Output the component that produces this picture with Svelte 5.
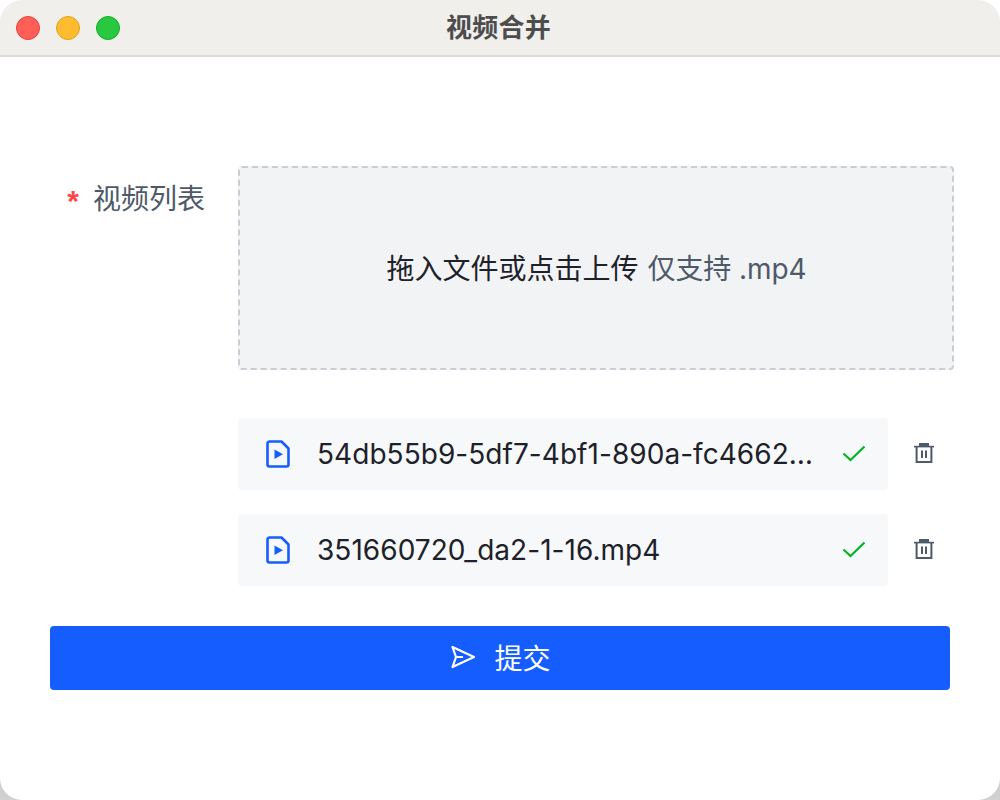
<script>
    const files = [
        { name: '54db55b9-5df7-4bf1-890a-fc4662b1c3d7.mp4' },
        { name: '351660720_da2-1-16.mp4' }
    ];
</script>

<div class="window">
    <header class="titlebar">
        <div class="lights">
            <span class="light red"></span>
            <span class="light yellow"></span>
            <span class="light green"></span>
        </div>
        <span class="title">视频合并</span>
    </header>

    <main class="content">
        <div class="form-row">
            <div class="label"><span class="star">*</span>视频列表</div>
            <div class="control">
                <div class="dropzone">
                    <span>拖入文件或点击上传</span>
                    <span class="hint">仅支持 .mp4</span>
                </div>

                <ul class="files">
                    {#each files as file}
                        <li class="file-row">
                            <div class="file">
                                <svg class="file-icon" viewBox="0 0 24 28" width="24" height="28" fill="none">
                                    <path d="M3.5 1.5H15.5L22.5 8.5V24.5A2 2 0 0 1 20.5 26.5H3.5A2 2 0 0 1 1.5 24.5V3.5A2 2 0 0 1 3.5 1.5Z" stroke="#165dff" stroke-width="2.6" stroke-linejoin="round" />
                                    <path d="M8.5 9.5L17 14.2L8.5 19Z" fill="#165dff" />
                                </svg>
                                <span class="file-name">{file.name}</span>
                                <svg class="check" viewBox="0 0 24 24" width="24" height="24" fill="none">
                                    <path d="M1.5 12.5L8.5 19L22.5 5.5" stroke="#00b42a" stroke-width="2.2" />
                                </svg>
                            </div>
                            <svg class="trash" viewBox="0 0 20 20" width="20" height="20" fill="none">
                                <path d="M0 3.6H20" stroke="#4e5969" stroke-width="1.6" />
                                <path d="M5 0H15V3H5Z" fill="#4e5969" />
                                <path d="M2.6 3.6V19H17.4V3.6" stroke="#4e5969" stroke-width="2" />
                                <path d="M8 7.5V15M12 7.5V15" stroke="#4e5969" stroke-width="2" />
                            </svg>
                        </li>
                    {/each}
                </ul>
            </div>
        </div>

        <button class="submit">
            <svg viewBox="0 0 24 24" width="24" height="24" fill="none">
                <path d="M1.5 2L23 12L1.5 22L5 12Z" stroke="#fff" stroke-width="2.2" stroke-linejoin="round" />
                <path d="M5 12H12" stroke="#fff" stroke-width="2" />
            </svg>
            <span>提交</span>
        </button>
    </main>
</div>

<style>
    :global(body) {
        margin: 0;
        background: linear-gradient(#fff 50%, #d0d0d0 50%);
    }

    * {
        box-sizing: border-box;
    }

    .window {
        width: 1000px;
        height: 800px;
        background: #fff;
        border-radius: 22px;
        overflow: hidden;
        font-family: Inter, 'Noto Sans CJK SC', sans-serif;
        font-size: 28px;
        color: #1d2129;
    }

    .titlebar {
        height: 57px;
        background: #f0efec;
        border-bottom: 2px solid #dcdcdc;
        display: flex;
        align-items: center;
        justify-content: center;
        position: relative;
        padding: 0 3px 4px 0;
    }

    .lights {
        position: absolute;
        left: 16px;
        top: 16px;
        display: flex;
        gap: 16px;
    }

    .light {
        width: 24px;
        height: 24px;
        border-radius: 50%;
        border: 1px solid;
    }

    .red {
        background: #ff5f57;
        border-color: #e0443e;
    }

    .yellow {
        background: #febc2e;
        border-color: #dea123;
    }

    .green {
        background: #28c840;
        border-color: #1aab29;
    }

    .title {
        font-size: 26px;
        font-weight: 700;
        color: #4d4d4d;
        letter-spacing: 0.3px;
    }

    .content {
        padding: 109px 50px 0;
    }

    .form-row {
        display: flex;
    }

    .label {
        flex: none;
        width: 188px;
        padding: 15px 33px 0 0;
        color: #4e5969;
        line-height: 36px;
        white-space: nowrap;
        display: flex;
        justify-content: flex-end;
    }

    .star {
        color: #ff4646;
        margin: 2px 14px 0 0;
        font-family: 'Liberation Sans', sans-serif;
        font-size: 30px;
        font-weight: 700;
        width: 12px;
        text-align: center;
    }

    .control {
        flex: none;
        width: 716px;
    }

    .dropzone {
        height: 204px;
        background: #f2f3f5;
        border: 2px dashed #c9cdd4;
        border-radius: 4px;
        display: flex;
        align-items: center;
        justify-content: center;
        gap: 9px;
        padding: 0 0 3px 1px;
    }

    .hint {
        color: #4e5969;
        letter-spacing: -0.1px;
    }

    .files {
        list-style: none;
        margin: 48px 0 0;
        padding: 0;
        display: flex;
        flex-direction: column;
        gap: 24px;
    }

    .file-row {
        display: flex;
        align-items: center;
        gap: 26px;
    }

    .file {
        width: 650px;
        height: 72px;
        background: #f7f8fa;
        border-radius: 4px;
        display: flex;
        align-items: center;
        padding: 0 22px 0 28px;
    }

    .file-name {
        flex: 1;
        min-width: 0;
        margin: 0 18px 0 27px;
        white-space: nowrap;
        overflow: hidden;
        text-overflow: ellipsis;
        letter-spacing: 0.05px;
    }

    .file-icon,
    .check,
    .trash {
        flex: none;
    }

    .check {
        margin-top: -2px;
    }

    .trash {
        margin: -2px 0 0 0;
    }

    .submit {
        width: 900px;
        height: 64px;
        margin-top: 40px;
        background: #165dff;
        border: none;
        border-radius: 4px;
        color: #fff;
        font: inherit;
        display: flex;
        align-items: center;
        justify-content: center;
        gap: 19px;
        padding: 0 0 2px 2px;
    }
</style>
